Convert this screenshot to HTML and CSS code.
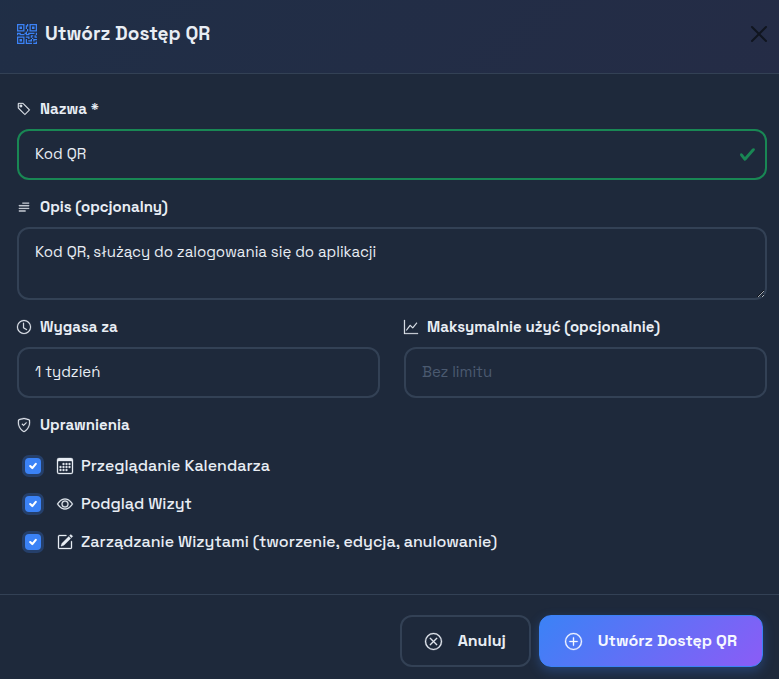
FILE: index.html
```html
<!DOCTYPE html>
<html lang="pl">
<head>
<meta charset="utf-8">
<meta name="viewport" content="width=device-width, initial-scale=1">
<title>Utwórz Dostęp QR</title>
<link rel="stylesheet" href="styles.css">
</head>
<body>
<form class="modal">
  <header class="modal-header">
    <h1 class="modal-title">
      <svg class="icon icon-qr" viewBox="0 0 16 16" aria-hidden="true"><path d="M2 2h2v2H2z"/><path d="M6 0v6H0V0zM5 1H1v4h4zM4 12H2v2h2z"/><path d="M6 10v6H0v-6zm-5 1v4h4v-4zm11-9h2v2h-2z"/><path d="M10 0v6h6V0zm5 1v4h-4V1zM8 1V0h1v2H8v2H7V1zm0 5V4h1v2zM6 8V7h1V6h1v2h1V7h5v1h-4v1H7V8zm0 0v1H2V8H1v1H0V7h3v1zm10 1h-1V7h1zm-1 0h-1v2h2v-1h-1zm-4 0h2v1h-1v1h-1zm2 3v-1h-1v1h-1v1H9v1h3v-2zm0 0h3v1h-2v1h-1zm-4-1v1h1v-2H7v1z"/><path d="M7 12h1v3h4v1H7zm9 2v2h-3v-1h2v-1z"/></svg>
      Utwórz Dostęp QR
    </h1>
    <button class="close" type="button" aria-label="Zamknij">
      <svg class="icon icon-close" viewBox="0 0 16 16" aria-hidden="true"><path d="M.293.293a1 1 0 0 1 1.414 0L8 6.586 14.293.293a1 1 0 1 1 1.414 1.414L9.414 8l6.293 6.293a1 1 0 0 1-1.414 1.414L8 9.414l-6.293 6.293a1 1 0 0 1-1.414-1.414L6.586 8 .293 1.707a1 1 0 0 1 0-1.414"/></svg>
    </button>
  </header>

  <main class="modal-body">
    <div class="field">
      <label class="label" for="name">
        <svg class="icon" viewBox="0 0 16 16" aria-hidden="true"><path d="M6 4.500a1.500 1.500 0 1 1-3 0 1.500 1.500 0 0 1 3 0m-1 0a.5.5 0 1 0-1 0 .5.5 0 0 0 1 0"/><path d="M2 1h4.586a1 1 0 0 1 .707.293l7 7a1 1 0 0 1 0 1.414l-4.586 4.586a1 1 0 0 1-1.414 0l-7-7A1 1 0 0 1 1 6.586V2a1 1 0 0 1 1-1m0 5.586 7 7L13.586 9l-7-7H2z"/></svg>
        Nazwa *
      </label>
      <div class="valid-wrap">
        <input class="control control-valid" id="name" type="text" value="Kod QR" required>
        <svg class="valid-mark" viewBox="0 0 8 8" aria-hidden="true"><path d="M2.3 6.730.6 4.530c-.4-1.040.46-1.400 1.100-.8l1.100 1.400 3.400-3.800c.6-.63 1.600-.27 1.200.7l-4 4.600c-.43.5-.8.4-1.100.1"/></svg>
      </div>
    </div>

    <div class="field">
      <label class="label" for="description">
        <svg class="icon" viewBox="0 0 16 16" aria-hidden="true"><path d="M2 12.500a.5.5 0 0 1 .5-.5h7a.5.5 0 0 1 0 1h-7a.5.5 0 0 1-.5-.5m0-3a.5.5 0 0 1 .5-.5h11a.5.5 0 0 1 0 1h-11a.5.5 0 0 1-.5-.5m0-3a.5.5 0 0 1 .5-.5h11a.5.5 0 0 1 0 1h-11a.5.5 0 0 1-.5-.5m4-3a.5.5 0 0 1 .5-.5h7a.5.5 0 0 1 0 1h-7a.5.5 0 0 1-.5-.5"/></svg>
        Opis (opcjonalny)
      </label>
      <textarea class="control control-area" id="description">Kod QR, służący do zalogowania się do aplikacji</textarea>
    </div>

    <div class="columns">
      <div class="field">
        <label class="label" for="expires">
          <svg class="icon" viewBox="0 0 16 16" aria-hidden="true"><path d="M8 3.500a.5.5 0 0 0-1 0V9a.5.5 0 0 0 .252.434l3.500 2a.5.5 0 0 0 .496-.868L8 8.710z"/><path d="M8 16A8 8 0 1 0 8 0a8 8 0 0 0 0 16m7-8A7 7 0 1 1 1 8a7 7 0 0 1 14 0"/></svg>
          Wygasa za
        </label>
        <select class="control" id="expires">
          <option>1 tydzień</option>
        </select>
      </div>
      <div class="field">
        <label class="label" for="limit">
          <svg class="icon" viewBox="0 0 16 16" aria-hidden="true"><path d="M0 0h1v15h15v1H0zm14.817 3.113a.5.5 0 0 1 .07.704l-4.500 5.500a.5.5 0 0 1-.74.037L7.060 6.767l-3.656 5.027a.5.5 0 0 1-.808-.588l4-5.500a.5.5 0 0 1 .758-.06l2.609 2.610 4.150-5.073a.5.5 0 0 1 .704-.07"/></svg>
          Maksymalnie użyć (opcjonalnie)
        </label>
        <input class="control" id="limit" type="number" placeholder="Bez limitu">
      </div>
    </div>

    <fieldset class="permissions">
      <legend class="label">
        <svg class="icon" viewBox="0 0 16 16" aria-hidden="true"><path d="M5.338 1.590a61 61 0 0 0-2.837.856.48.48 0 0 0-.328.39c-.554 4.157.726 7.190 2.253 9.188a10.700 10.700 0 0 0 2.287 2.233c.346.244.652.42.893.533q.18.085.293.118a1 1 0 0 0 .101.025 1 1 0 0 0 .1-.025q.114-.034.294-.118c.24-.113.547-.29.893-.533a10.700 10.700 0 0 0 2.287-2.233c1.527-1.997 2.807-5.031 2.253-9.188a.48.48 0 0 0-.328-.39c-.651-.213-1.750-.56-2.837-.855C9.552 1.290 8.531 1.067 8 1.067c-.53 0-1.552.223-2.662.524zM5.072.56C6.157.265 7.310 0 8 0s1.843.265 2.928.56c1.110.3 2.229.655 2.887.87a1.540 1.540 0 0 1 1.044 1.262c.596 4.477-.787 7.795-2.465 9.990a11.800 11.800 0 0 1-2.517 2.453 7 7 0 0 1-1.048.625c-.28.132-.581.24-.829.24s-.548-.108-.829-.24a7 7 0 0 1-1.048-.625 11.800 11.800 0 0 1-2.517-2.453C1.928 10.487.545 7.169 1.141 2.692A1.540 1.540 0 0 1 2.185 1.430 63 63 0 0 1 5.072.56"/><path d="M10.854 5.146a.5.5 0 0 1 0 .708l-3 3a.5.5 0 0 1-.708 0l-1.500-1.500a.5.5 0 1 1 .708-.708L7.500 7.793l2.646-2.647a.5.5 0 0 1 .708 0"/></svg>
        Uprawnienia
      </legend>
      <div class="checks">
        <label class="check">
          <input class="checkbox" type="checkbox" checked>
          <svg class="icon" viewBox="0 0 16 16" aria-hidden="true"><path d="M14 0H2a2 2 0 0 0-2 2v12a2 2 0 0 0 2 2h12a2 2 0 0 0 2-2V2a2 2 0 0 0-2-2M1 3.857C1 3.384 1.448 3 2 3h12c.552 0 1 .384 1 .857v10.286c0 .473-.448.857-1 .857H2c-.552 0-1-.384-1-.857z"/><path d="M6.500 7a1 1 0 1 0 0-2 1 1 0 0 0 0 2m3 0a1 1 0 1 0 0-2 1 1 0 0 0 0 2m3 0a1 1 0 1 0 0-2 1 1 0 0 0 0 2m-9 3a1 1 0 1 0 0-2 1 1 0 0 0 0 2m3 0a1 1 0 1 0 0-2 1 1 0 0 0 0 2m3 0a1 1 0 1 0 0-2 1 1 0 0 0 0 2m3 0a1 1 0 1 0 0-2 1 1 0 0 0 0 2m-9 3a1 1 0 1 0 0-2 1 1 0 0 0 0 2m3 0a1 1 0 1 0 0-2 1 1 0 0 0 0 2m3 0a1 1 0 1 0 0-2 1 1 0 0 0 0 2"/></svg>
          Przeglądanie Kalendarza
        </label>
        <label class="check">
          <input class="checkbox" type="checkbox" checked>
          <svg class="icon" viewBox="0 0 16 16" aria-hidden="true"><path d="M16 8s-3-5.500-8-5.500S0 8 0 8s3 5.500 8 5.500S16 8 16 8M1.173 8a13 13 0 0 1 1.660-2.043C4.120 4.668 5.880 3.500 8 3.500s3.879 1.168 5.168 2.457A13 13 0 0 1 14.828 8q-.086.13-.195.288c-.335.48-.83 1.120-1.465 1.755C11.879 11.332 10.119 12.500 8 12.500s-3.879-1.168-5.168-2.457A13 13 0 0 1 1.172 8z"/><path d="M8 5.500a2.500 2.500 0 1 0 0 5 2.500 2.500 0 0 0 0-5M4.500 8a3.500 3.500 0 1 1 7 0 3.500 3.500 0 0 1-7 0"/></svg>
          Podgląd Wizyt
        </label>
        <label class="check">
          <input class="checkbox" type="checkbox" checked>
          <svg class="icon" viewBox="0 0 16 16" aria-hidden="true"><path d="M15.502 1.940a.5.5 0 0 1 0 .706L14.459 3.690l-2-2L13.502.646a.5.5 0 0 1 .707 0l1.293 1.293zm-1.750 2.456-2-2L4.939 9.210a.5.5 0 0 0-.121.196l-.805 2.414a.25.25 0 0 0 .316.316l2.414-.805a.5.5 0 0 0 .196-.12l6.813-6.814z"/><path fill-rule="evenodd" d="M1 13.500A1.500 1.500 0 0 0 2.500 15h11a1.500 1.500 0 0 0 1.500-1.500v-6a.5.5 0 0 0-1 0v6a.5.5 0 0 1-.5.5h-11a.5.5 0 0 1-.5-.5v-11a.5.5 0 0 1 .5-.5H9a.5.5 0 0 0 0-1H2.500A1.500 1.500 0 0 0 1 2.500z"/></svg>
          Zarządzanie Wizytami (tworzenie, edycja, anulowanie)
        </label>
      </div>
    </fieldset>
  </main>

  <footer class="modal-footer">
    <button class="button" type="button">
      <svg class="icon" viewBox="0 0 16 16" aria-hidden="true"><path d="M8 15A7 7 0 1 1 8 1a7 7 0 0 1 0 14m0 1A8 8 0 1 0 8 0a8 8 0 0 0 0 16"/><path d="M4.646 4.646a.5.5 0 0 1 .708 0L8 7.293l2.646-2.647a.5.5 0 0 1 .708.708L8.707 8l2.647 2.646a.5.5 0 0 1-.708.708L8 8.707l-2.646 2.647a.5.5 0 0 1-.708-.708L7.293 8 4.646 5.354a.5.5 0 0 1 0-.708"/></svg>
      Anuluj
    </button>
    <button class="button button-primary" type="submit">
      <svg class="icon" viewBox="0 0 16 16" aria-hidden="true"><path d="M8 15A7 7 0 1 1 8 1a7 7 0 0 1 0 14m0 1A8 8 0 1 0 8 0a8 8 0 0 0 0 16"/><path d="M8 4a.5.5 0 0 1 .5.5v3h3a.5.5 0 0 1 0 1h-3v3a.5.5 0 0 1-1 0v-3h-3a.5.5 0 0 1 0-1h3v-3A.5.5 0 0 1 8 4"/></svg>
      Utwórz Dostęp QR
    </button>
  </footer>
</form>
</body>
</html>
```
FILE: styles.css
```css
:root {
  --surface: #1e293b;
  --border: #334155;
  --text: #e8edf4;
  --blue: #3b82f6;
  --violet: #8b5cf6;
  --green: #198754;
}

* {
  box-sizing: border-box;
}

body {
  margin: 0;
  background: var(--surface);
  color: var(--text);
  font-family: "Space Grotesk", Inter, sans-serif;
  font-size: 15px;
  line-height: 24px;
}

input,
select,
textarea,
button {
  font: inherit;
  color: inherit;
}

.icon {
  flex: none;
  width: 16px;
  height: 16px;
  overflow: visible;
  fill: currentColor;
}

.label .icon,
.check .icon,
.button .icon {
  stroke: currentColor;
  stroke-width: 0.3;
}

.modal-header {
  display: flex;
  align-items: center;
  justify-content: space-between;
  padding: 19px 12px 25px 17px;
  border-bottom: 1px solid var(--border);
  background: linear-gradient(135deg, rgba(59, 130, 246, 0.06), rgba(139, 92, 246, 0.06));
}

.modal-title {
  display: flex;
  align-items: center;
  gap: 8px;
  margin: 0;
  font-size: 19px;
  font-weight: 700;
  line-height: 29px;
}

.icon-qr {
  width: 20px;
  height: 20px;
  fill: var(--blue);
}

.close {
  display: flex;
  padding: 0;
  border: 0;
  background: none;
  color: #10151f;
}

.modal-body {
  padding: 24px 12px 40px 17px;
}

.field {
  margin-bottom: 16px;
}

.label {
  display: flex;
  align-items: center;
  gap: 9px;
  margin-bottom: 10px;
  padding: 0;
  font-size: 15px;
  font-weight: 600;
  line-height: 21px;
}

.label .icon {
  width: 14px;
  height: 14px;
}

.control {
  display: block;
  width: 100%;
  height: 51px;
  margin: 0;
  padding: 10px 16px 12px;
  border: 2px solid var(--border);
  border-radius: 12px;
  outline: 0;
  background: var(--surface);
  appearance: none;
}

.control::placeholder {
  color: #4b5a70;
  opacity: 1;
}

.control-area {
  height: 73px;
  padding-top: 11px;
  resize: vertical;
}

.valid-wrap {
  position: relative;
}

.control-valid {
  padding-right: 44px;
  border-color: var(--green);
}

.valid-mark {
  position: absolute;
  top: 0;
  right: 11px;
  bottom: 0;
  width: 17px;
  height: 17px;
  margin: auto 0;
  fill: var(--green);
}

.columns {
  display: grid;
  grid-template-columns: 1fr 1fr;
  gap: 24px;
}

.permissions {
  margin: 0;
  padding: 0;
  border: 0;
}

.checks {
  display: grid;
  gap: 14px;
  padding: 9px 8px 0;
}

.check {
  display: flex;
  align-items: center;
  gap: 8px;
  font-size: 16px;
  font-weight: 500;
}

.checkbox {
  width: 16px;
  height: 16px;
  margin: 0 8px 0 0;
  border-radius: 4px;
  background: var(--blue) url("data:image/svg+xml,%3Csvg xmlns='http://www.w3.org/2000/svg' viewBox='0 0 20 20'%3E%3Cpath fill='none' stroke='%23fff' stroke-linecap='round' stroke-linejoin='round' stroke-width='3' d='m6 10 3 3 5-6'/%3E%3C/svg%3E") center / 14px no-repeat;
  box-shadow: 0 0 0 3px rgba(59, 130, 246, 0.25);
  appearance: none;
}

.modal-footer {
  display: flex;
  justify-content: flex-end;
  gap: 8px;
  padding: 20px 16px 12px;
  border-top: 1px solid var(--border);
}

.button {
  display: flex;
  align-items: center;
  gap: 16px;
  height: 52px;
  padding: 0 23px;
  border: 2px solid var(--border);
  border-radius: 12px;
  background: none;
  font-size: 16px;
  font-weight: 600;
}

.button .icon {
  width: 17px;
  height: 17px;
}

.button-primary {
  border: 1px solid var(--blue);
  padding: 0 25px;
  background: linear-gradient(135deg, var(--blue), var(--violet));
  box-shadow: 0 4px 12px rgba(59, 130, 246, 0.3);
  color: #f5f8ff;
}
```
